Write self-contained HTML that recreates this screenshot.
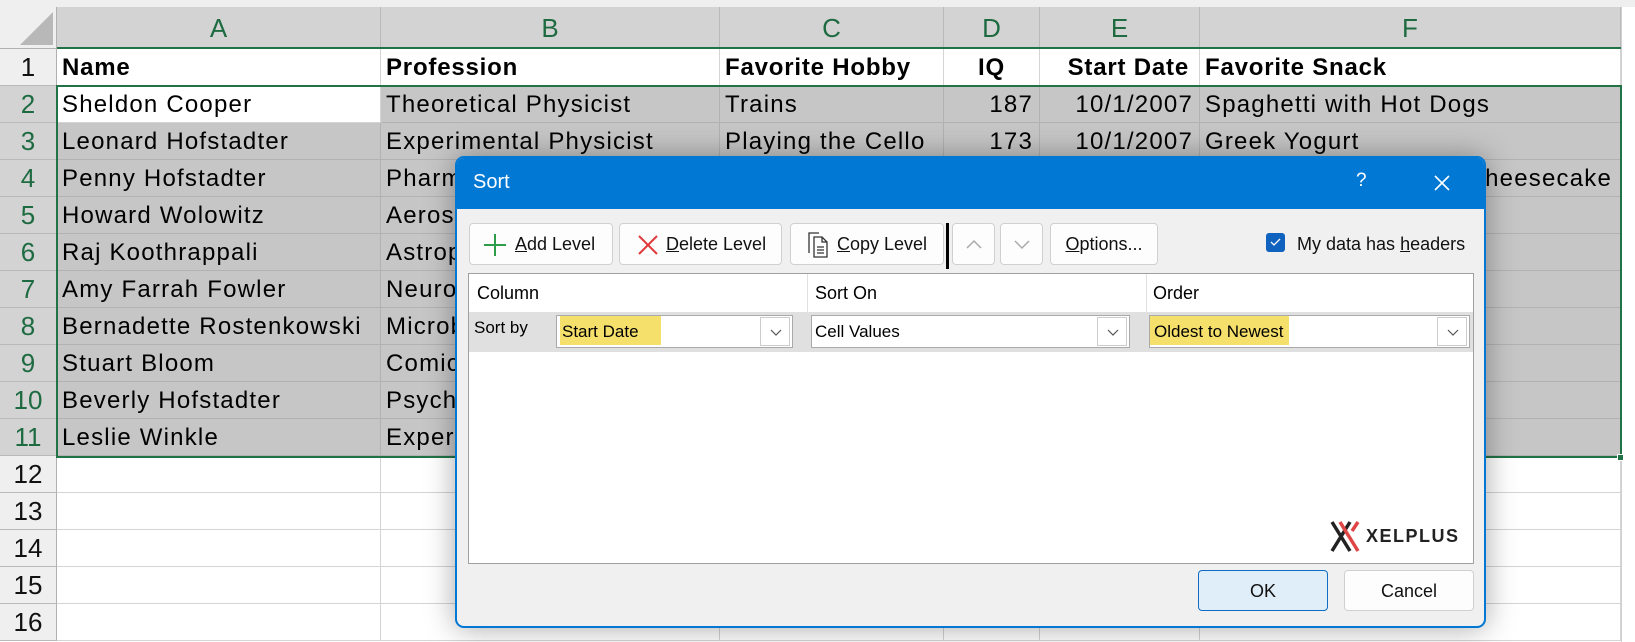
<!DOCTYPE html>
<html><head><meta charset="utf-8"><style>
*{box-sizing:border-box;margin:0;padding:0}
body{width:1635px;height:642px;overflow:hidden;background:#fff;font-family:"Liberation Sans",sans-serif;position:relative}
.abs{position:absolute}
.topstrip{left:0;top:0;width:1635px;height:7px;background:#efefef}
.colh{top:7px;height:42px;background:#d3d3d3;border-right:1px solid #b9b9b9;color:#1e6b41;font-size:26px;text-align:center;line-height:42px}
.rowh{left:0;width:57px;height:37px;border-bottom:1px solid #b9b9b9;border-right:1px solid #b0b0b0;font-size:26px;text-align:center;line-height:37px;background:#efefef;color:#111}
.rowh.sel{background:#d3d3d3;color:#1e6b41}
.cell{height:37px;border-right:1px solid #d4d4d4;border-bottom:1px solid #d4d4d4;font-size:24px;letter-spacing:1.2px;line-height:37px;padding-left:5px;white-space:nowrap;overflow:hidden;color:#000}
.cell.s{background:#c6c6c6;border-color:#b2b2b2}
.cell.b{font-weight:bold;letter-spacing:0.8px}
.cell.r{text-align:right;padding-right:6px}
.dlg{left:455px;top:156px;width:1031px;height:472px;background:#f0f0f0;border:2px solid #0078d4;border-radius:9px;overflow:hidden;box-shadow:0 0 30px rgba(0,0,0,.35)}
.title{left:0;top:0;width:100%;height:51px;background:#0078d4;color:#fff;font-size:20px}
.btn{height:42px;background:#fdfdfd;border:1px solid #d0d0d0;border-radius:4px;font-size:18px;line-height:40px;color:#111}
.combo{height:33px;background:#fff;border:1px solid #aaa;font-size:17px;line-height:31px;padding-left:3px}
.dd{width:30px;height:29px;border:1px solid #ccc;top:1px;right:2px;background:#fff}
.hl{background:#f5e06c}
u{text-decoration:underline}
</style></head><body>
<div class="abs topstrip"></div>
<div class="abs" style="left:0;top:7px;width:57px;height:42px;background:#efefef;border-right:1px solid #b0b0b0;border-bottom:1px solid #b0b0b0"></div>
<svg class="abs" style="left:18px;top:12px" width="36" height="34"><polygon points="35,0 35,33 2,33" fill="#b8b8b8"/></svg>
<div class="abs colh" style="left:57px;width:324px">A</div>
<div class="abs colh" style="left:381px;width:339px">B</div>
<div class="abs colh" style="left:720px;width:224px">C</div>
<div class="abs colh" style="left:944px;width:96px">D</div>
<div class="abs colh" style="left:1040px;width:160px">E</div>
<div class="abs colh" style="left:1200px;width:421px">F</div>
<div class="abs" style="left:1621px;top:7px;width:14px;height:635px;background:#fff;border-left:1px solid #d0d0d0"></div>
<div class="abs" style="left:57px;top:47px;width:1564px;height:2px;background:#217346"></div>

<div id="grid"></div>
<script>
var cols=[[57,324],[381,339],[720,224],[944,96],[1040,160],[1200,421]];
var data=[
["Name","Profession","Favorite Hobby","IQ","Start Date","Favorite Snack"],
["Sheldon Cooper","Theoretical Physicist","Trains","187","10/1/2007","Spaghetti with Hot Dogs"],
["Leonard Hofstadter","Experimental Physicist","Playing the Cello","173","10/1/2007","Greek Yogurt"],
["Penny Hofstadter","Pharmaceutical Sales","Acting","","","Cheesecake Factory Cheesecake"],
["Howard Wolowitz","Aerospace Engineer","","","",""],
["Raj Koothrappali","Astrophysicist","","","",""],
["Amy Farrah Fowler","Neuroscientist","","","",""],
["Bernadette Rostenkowski","Microbiologist","","","",""],
["Stuart Bloom","Comic Book Store Owner","","","",""],
["Beverly Hofstadter","Psychiatrist","","","",""],
["Leslie Winkle","Experimental Physicist","","","",""]];
var h="";
for(var r=0;r<16;r++){
 var y=49+r*37;
 h+='<div class="abs rowh'+(r>=1&&r<=10?' sel':'')+'" style="top:'+y+'px">'+(r+1)+'</div>';
 for(var c=0;c<6;c++){
  var t=r<11?data[r][c]:"";
  var cls="cell";
  if(r==0)cls+=" b";
  if(r>=1&&r<=10&&!(r==1&&c==0))cls+=" s";
  if(r>=1&&(c==3||c==4))cls+=" r";
  var st='left:'+cols[c][0]+'px;top:'+y+'px;width:'+cols[c][1]+'px';
  if(r==0&&c==3)st+=';text-align:center;padding-left:0';
  if(r==0&&c==4)st+=';text-align:right;padding-right:10px';
  if(r==3&&c==5)st+=';text-align:right;padding-right:8px';
  h+='<div class="abs '+cls+'" style="'+st+'">'+t+'</div>';
 }
}
document.getElementById("grid").innerHTML=h;
</script>
<div class="abs" style="left:56px;top:85px;width:1566px;height:373px;border:2px solid #217346"></div>
<div class="abs" style="left:1617px;top:454px;width:7px;height:7px;background:#217346;border:1px solid #fff"></div>

<div class="abs dlg">
 <div class="abs title"><span class="abs" style="left:16px;top:13px">Sort</span><span class="abs" style="left:899px;top:12px;font-size:19px">?</span>
  <svg class="abs" style="left:976px;top:16px" width="18" height="18"><path d="M2 2L16 16M16 2L2 16" stroke="#fff" stroke-width="1.6"/></svg></div>
 <div class="abs btn" style="left:12px;top:65px;width:144px"><svg class="abs" style="left:14px;top:10px" width="22" height="22"><path d="M11 0V22M0 11H22" stroke="#2e9d4a" stroke-width="2"/></svg><span class="abs" style="left:45px"><u>A</u>dd Level</span></div>
 <div class="abs btn" style="left:162px;top:65px;width:163px"><svg class="abs" style="left:18px;top:11px" width="20" height="20"><path d="M1 1L19 19M19 1L1 19" stroke="#e0393a" stroke-width="2"/></svg><span class="abs" style="left:46px"><u>D</u>elete Level</span></div>
 <div class="abs btn" style="left:333px;top:65px;width:154px"><svg class="abs" style="left:15px;top:8px" width="24" height="26"><path d="M3 21V1H13M8 5H16L21 10V25H8Z M16 5V10H21 M11 15H18M11 18H18M11 21H18" fill="none" stroke="#333" stroke-width="1.3"/></svg><span class="abs" style="left:46px"><u>C</u>opy Level</span></div>
 <div class="abs" style="left:489px;top:65px;width:3px;height:46px;background:#000"></div>
 <div class="abs btn" style="left:495px;top:65px;width:43px"><svg class="abs" style="left:13px;top:15px" width="16" height="10"><path d="M1 9L8 2L15 9" fill="none" stroke="#aaa" stroke-width="1.5"/></svg></div>
 <div class="abs btn" style="left:543px;top:65px;width:43px"><svg class="abs" style="left:13px;top:16px" width="16" height="10"><path d="M1 1L8 8L15 1" fill="none" stroke="#aaa" stroke-width="1.5"/></svg></div>
 <div class="abs btn" style="left:593px;top:65px;width:108px;text-align:center"><u>O</u>ptions...</div>
 <div class="abs" style="left:809px;top:75px;width:19px;height:19px;background:#0f62be;border-radius:3px"><svg class="abs" style="left:4px;top:5px" width="11" height="9"><path d="M1 4L4 7L10 1" fill="none" stroke="#fff" stroke-width="1.3"/></svg></div>
 <div class="abs" style="left:840px;top:76px;font-size:18px;color:#111">My data has <u>h</u>eaders</div>

 <div class="abs" style="left:11px;top:115px;width:1006px;height:291px;background:#fff;border:1px solid #a0a0a0">
  <div class="abs" style="left:338px;top:0;width:1px;height:38px;background:#e0e0e0"></div>
  <div class="abs" style="left:677px;top:0;width:1px;height:38px;background:#e0e0e0"></div>
  <div class="abs" style="left:8px;top:9px;font-size:18px">Column</div>
  <div class="abs" style="left:346px;top:9px;font-size:18px">Sort On</div>
  <div class="abs" style="left:684px;top:9px;font-size:18px">Order</div>
  <div class="abs" style="left:0;top:38px;width:1004px;height:40px;background:#e0e0e0"></div>
  <div class="abs" style="left:5px;top:44px;font-size:17px">Sort by</div>
  <div class="abs combo" style="left:87px;top:41px;width:237px"><span class="hl" style="display:inline-block;height:29px;padding:0 22px 0 2px">Start Date</span><div class="abs dd"><svg class="abs" style="left:9px;top:11px" width="12" height="8"><path d="M1 1L6 6L11 1" fill="none" stroke="#555" stroke-width="1.2"/></svg></div></div>
  <div class="abs combo" style="left:342px;top:41px;width:319px">Cell Values<div class="abs dd"><svg class="abs" style="left:9px;top:11px" width="12" height="8"><path d="M1 1L6 6L11 1" fill="none" stroke="#555" stroke-width="1.2"/></svg></div></div>
  <div class="abs combo" style="left:680px;top:41px;width:321px;padding-left:0"><span class="hl" style="display:inline-block;height:29px;padding:0 6px 0 4px">Oldest to Newest</span><div class="abs dd"><svg class="abs" style="left:9px;top:11px" width="12" height="8"><path d="M1 1L6 6L11 1" fill="none" stroke="#555" stroke-width="1.2"/></svg></div></div>
  <svg class="abs" style="left:861px;top:247px" width="34" height="31"><path d="M2 1L20 30M2 30L20 1" stroke="#222" stroke-width="3.5"/><path d="M10 1L28 30" stroke="#e04545" stroke-width="3.5"/><path d="M22 10L28 1" stroke="#e04545" stroke-width="3.5"/></svg>
  <div class="abs" style="left:897px;top:252px;font-size:18px;font-weight:bold;letter-spacing:1.5px;color:#222">XELPLUS</div>
 </div>
 <div class="abs btn" style="left:741px;top:412px;width:130px;height:41px;background:#e0eef9;border:1.5px solid #0f6cc4;text-align:center">OK</div>
 <div class="abs btn" style="left:887px;top:412px;width:130px;height:41px;text-align:center">Cancel</div>
</div>
</body></html>
